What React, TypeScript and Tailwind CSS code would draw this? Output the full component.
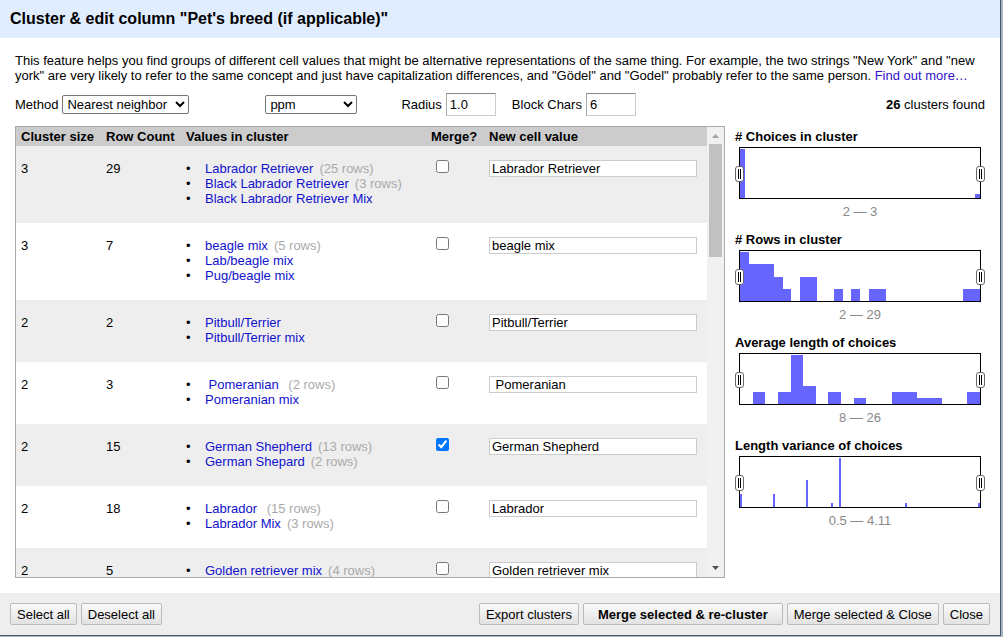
import { useId, useState } from "react";

type Choice = { text: string; rows?: number };
type Cluster = { size: number; rows: number; choices: Choice[]; value: string; merge?: boolean };

const clusters: Cluster[] = [
  {
    size: 3,
    rows: 29,
    choices: [
      { text: "Labrador Retriever", rows: 25 },
      { text: "Black Labrador Retriever", rows: 3 },
      { text: "Black Labrador Retriever Mix" },
    ],
    value: "Labrador Retriever",
  },
  {
    size: 3,
    rows: 7,
    choices: [{ text: "beagle mix", rows: 5 }, { text: "Lab/beagle mix" }, { text: "Pug/beagle mix" }],
    value: "beagle mix",
  },
  { size: 2, rows: 2, choices: [{ text: "Pitbull/Terrier" }, { text: "Pitbull/Terrier mix" }], value: "Pitbull/Terrier" },
  { size: 2, rows: 3, choices: [{ text: " Pomeranian ", rows: 2 }, { text: "Pomeranian mix" }], value: " Pomeranian" },
  {
    size: 2,
    rows: 15,
    choices: [
      { text: "German Shepherd", rows: 13 },
      { text: "German Shepard", rows: 2 },
    ],
    value: "German Shepherd",
    merge: true,
  },
  {
    size: 2,
    rows: 18,
    choices: [
      { text: "Labrador ", rows: 15 },
      { text: "Labrador Mix", rows: 3 },
    ],
    value: "Labrador",
  },
  { size: 2, rows: 5, choices: [{ text: "Golden retriever mix", rows: 4 }], value: "Golden retriever mix" },
];

/* A bar is [first bin, height]; bins divide the 240-unit axis evenly. */
type Facet = { title: string; range: string; step: number; barWidth: number; bars: [number, number][] };

const facets: Facet[] = [
  { title: "# Choices in cluster", range: "2 — 3", step: 5, barWidth: 5, bars: [[0, 49], [47, 4]] },
  {
    title: "# Rows in cluster",
    range: "2 — 29",
    step: 240 / 28,
    barWidth: 240 / 28,
    bars: [[0, 49], [1, 37], [2, 37], [3, 37], [4, 24], [5, 12], [7, 24], [8, 24], [11, 12], [13, 12], [15, 12], [16, 12], [26, 12], [27, 12]],
  },
  {
    title: "Average length of choices",
    range: "8 — 26",
    step: 240 / 19,
    barWidth: 240 / 19,
    bars: [[1, 12], [3, 12], [4, 49], [5, 18], [7, 12], [9, 6], [12, 12], [13, 12], [14, 6], [15, 6], [18, 12]],
  },
  {
    title: "Length variance of choices",
    range: "0.5 — 4.11",
    step: 1,
    barWidth: 2,
    bars: [[0, 13], [33, 13], [66, 27], [91, 4], [99, 49], [165, 4], [238, 4]],
  },
];

function Handle({ side }: { side: "left" | "right" }) {
  return (
    <svg
      className={side === "left" ? "absolute top-[18px] -left-[5px] h-4 w-[9px]" : "absolute top-[18px] -right-[5px] h-4 w-[9px]"}
      viewBox="0 0 9 16"
      aria-hidden="true"
    >
      <rect x="0.5" y="0.5" width="8" height="15" rx="2.500" fill="#fff" stroke="#666" />
      <path d="M3.5 3v10M5.5 3v10" stroke="#000" />
    </svg>
  );
}

function RangeFacet({ facet }: { facet: Facet }) {
  return (
    <section>
      <h2 className="mb-[3px] font-bold">{facet.title}</h2>
      <div className="relative mx-1 h-[52px] border border-black">
        <svg
          className="block h-full w-full"
          viewBox="0 0 240 50"
          preserveAspectRatio="none"
          shapeRendering="crispEdges"
          aria-hidden="true"
        >
          {facet.bars.map(([bin, height]) => (
            <rect key={bin} x={bin * facet.step} y={50 - height} width={facet.barWidth} height={height} fill="#6666ff" />
          ))}
        </svg>
        <Handle side="left" />
        <Handle side="right" />
      </div>
      <p className="mt-[5px] text-center text-[#888]">{facet.range}</p>
    </section>
  );
}

function ClusterRow({ cluster, striped }: { cluster: Cluster; striped: boolean }) {
  const [merge, setMerge] = useState(Boolean(cluster.merge));
  const [value, setValue] = useState(cluster.value);
  return (
    <tr className={striped ? "bg-[#eee] align-top" : "bg-white align-top"}>
      <td className="px-[5px] pt-[15px] pb-[17px]">{cluster.size}</td>
      <td className="px-[5px] pt-[15px] pb-[17px]">{cluster.rows}</td>
      <td className="px-[5px] pt-[15px] pb-[17px]">
        <ul>
          {cluster.choices.map((choice) => (
            <li key={choice.text} className="flex whitespace-pre before:w-[19px] before:shrink-0 before:content-['•']">
              <a href="#" className="text-[#1111cc]">
                {choice.text}
              </a>
              {choice.rows && <span className="ml-[6px] text-[#aaa]">({choice.rows} rows)</span>}
            </li>
          ))}
        </ul>
      </td>
      <td className="px-[5px] pt-[14px]">
        <input
          type="checkbox"
          aria-label="Merge?"
          className="ml-[5px] block size-[13px]"
          checked={merge}
          onChange={(e) => setMerge(e.target.checked)}
        />
      </td>
      <td className="pt-[14px] pr-[10px] pl-[5px]">
        <input
          type="text"
          aria-label="New cell value"
          className="block h-[17px] w-full border border-[#ccc] bg-white px-[2px]"
          value={value}
          onChange={(e) => setValue(e.target.value)}
        />
      </td>
    </tr>
  );
}

function Scrollbar() {
  return (
    <div className="flex w-[17px] shrink-0 flex-col items-center bg-[#f1f1f1]" aria-hidden="true">
      <svg className="h-[17px] w-[17px] shrink-0" viewBox="0 0 17 17">
        <path d="M5 11h7L8.500 7z" fill="#a3a3a3" />
      </svg>
      <div className="h-1/4 w-[13px] bg-[#c1c1c1]" />
      <svg className="mt-auto h-[17px] w-[17px] shrink-0" viewBox="0 0 17 17">
        <path d="M5 6h7L8.500 10z" fill="#505050" />
      </svg>
    </div>
  );
}

function NumberBox({ label, initial }: { label: string; initial: string }) {
  const id = useId();
  return (
    <div className="flex items-center gap-1">
      <label htmlFor={id}>{label}</label>
      <input
        id={id}
        type="text"
        defaultValue={initial}
        className="h-[23px] w-[50px] border border-[#ccc] border-t-[#888] border-l-[#aaa] bg-white px-[3px]"
      />
    </div>
  );
}

const buttonBase = "h-[22px] rounded-[2px] border border-[#bbb] bg-linear-to-b from-[#fafafa] to-[#e2e2e2] leading-[15px] whitespace-nowrap";

function Button({ children, primary = false }: { children: string; primary?: boolean }) {
  return (
    <button type="button" className={primary ? `${buttonBase} px-[14px] font-bold` : `${buttonBase} px-[6px]`}>
      {children}
    </button>
  );
}

export default function App() {
  return (
    <div className="h-screen bg-[#b0b4b8] pr-[2px] pb-px font-['Liberation_Sans',Arial,sans-serif] text-[13px] leading-[15px] text-black">
      <div className="flex h-full flex-col border-r border-b border-[#3f5a78] bg-white">
        <header className="flex h-[38px] shrink-0 items-center bg-[#e0edfe] px-[10px]">
          <h1 className="text-[16px] leading-5 font-bold">Cluster &amp; edit column "Pet's breed (if applicable)"</h1>
        </header>

        <main className="flex min-h-0 flex-1 flex-col p-[15px]">
          <p>
            This feature helps you find groups of different cell values that might be alternative representations of the same
            thing. For example, the two strings "New York" and "new york" are very likely to refer to the same concept and just
            have capitalization differences, and "Gödel" and "Godel" probably refer to the same person.{" "}
            <a href="#" className="text-[#3311cc]">
              Find out more…
            </a>
          </p>

          <div className="mt-[10px] mb-[10px] flex items-center">
            <label htmlFor="method" className="mr-1">
              Method
            </label>
            <select id="method" className="mr-[76px] h-[19px] w-[127px] rounded-[2px] border border-[#767676] bg-white">
              <option>Nearest neighbor</option>
            </select>
            <select
              id="distance"
              aria-label="Distance function"
              className="mr-[44px] h-[19px] w-[92px] rounded-[2px] border border-[#767676] bg-white"
            >
              <option>ppm</option>
            </select>
            <div className="flex gap-4">
              <NumberBox label="Radius" initial="1.0" />
              <NumberBox label="Block Chars" initial="6" />
            </div>
            <p className="ml-auto">
              <b>26</b> clusters found
            </p>
          </div>

          <div className="flex min-h-0 flex-1 gap-[10px]">
            <div className="flex min-w-0 flex-1 border border-[#aaa]">
              <div className="min-w-0 flex-1 overflow-y-auto [scrollbar-width:none]">
                <table className="w-full table-fixed border-collapse">
                  <colgroup>
                    <col className="w-[85px]" />
                    <col className="w-[80px]" />
                    <col />
                    <col className="w-[58px]" />
                    <col className="w-[223px]" />
                  </colgroup>
                  <thead>
                    <tr className="bg-[#ccc] text-left whitespace-nowrap">
                      <th className="px-[5px] py-[2px]">Cluster size</th>
                      <th className="px-[5px] py-[2px]">Row Count</th>
                      <th className="px-[5px] py-[2px]">Values in cluster</th>
                      <th className="px-[5px] py-[2px]">Merge?</th>
                      <th className="px-[5px] py-[2px]">New cell value</th>
                    </tr>
                  </thead>
                  <tbody>
                    {clusters.map((cluster, i) => (
                      <ClusterRow key={cluster.value} cluster={cluster} striped={i % 2 === 0} />
                    ))}
                  </tbody>
                </table>
              </div>
              <Scrollbar />
            </div>

            <aside className="flex w-[250px] shrink-0 flex-col gap-[13px] pt-[3px]">
              {facets.map((facet) => (
                <RangeFacet key={facet.title} facet={facet} />
              ))}
            </aside>
          </div>
        </main>

        <footer className="flex shrink-0 justify-between bg-[#eee] p-[10px]">
          <div className="flex gap-1">
            <Button>Select all</Button>
            <Button>Deselect all</Button>
          </div>
          <div className="flex gap-1">
            <Button>Export clusters</Button>
            <Button primary>Merge selected &amp; re-cluster</Button>
            <Button>Merge selected &amp; Close</Button>
            <Button>Close</Button>
          </div>
        </footer>
      </div>
    </div>
  );
}
